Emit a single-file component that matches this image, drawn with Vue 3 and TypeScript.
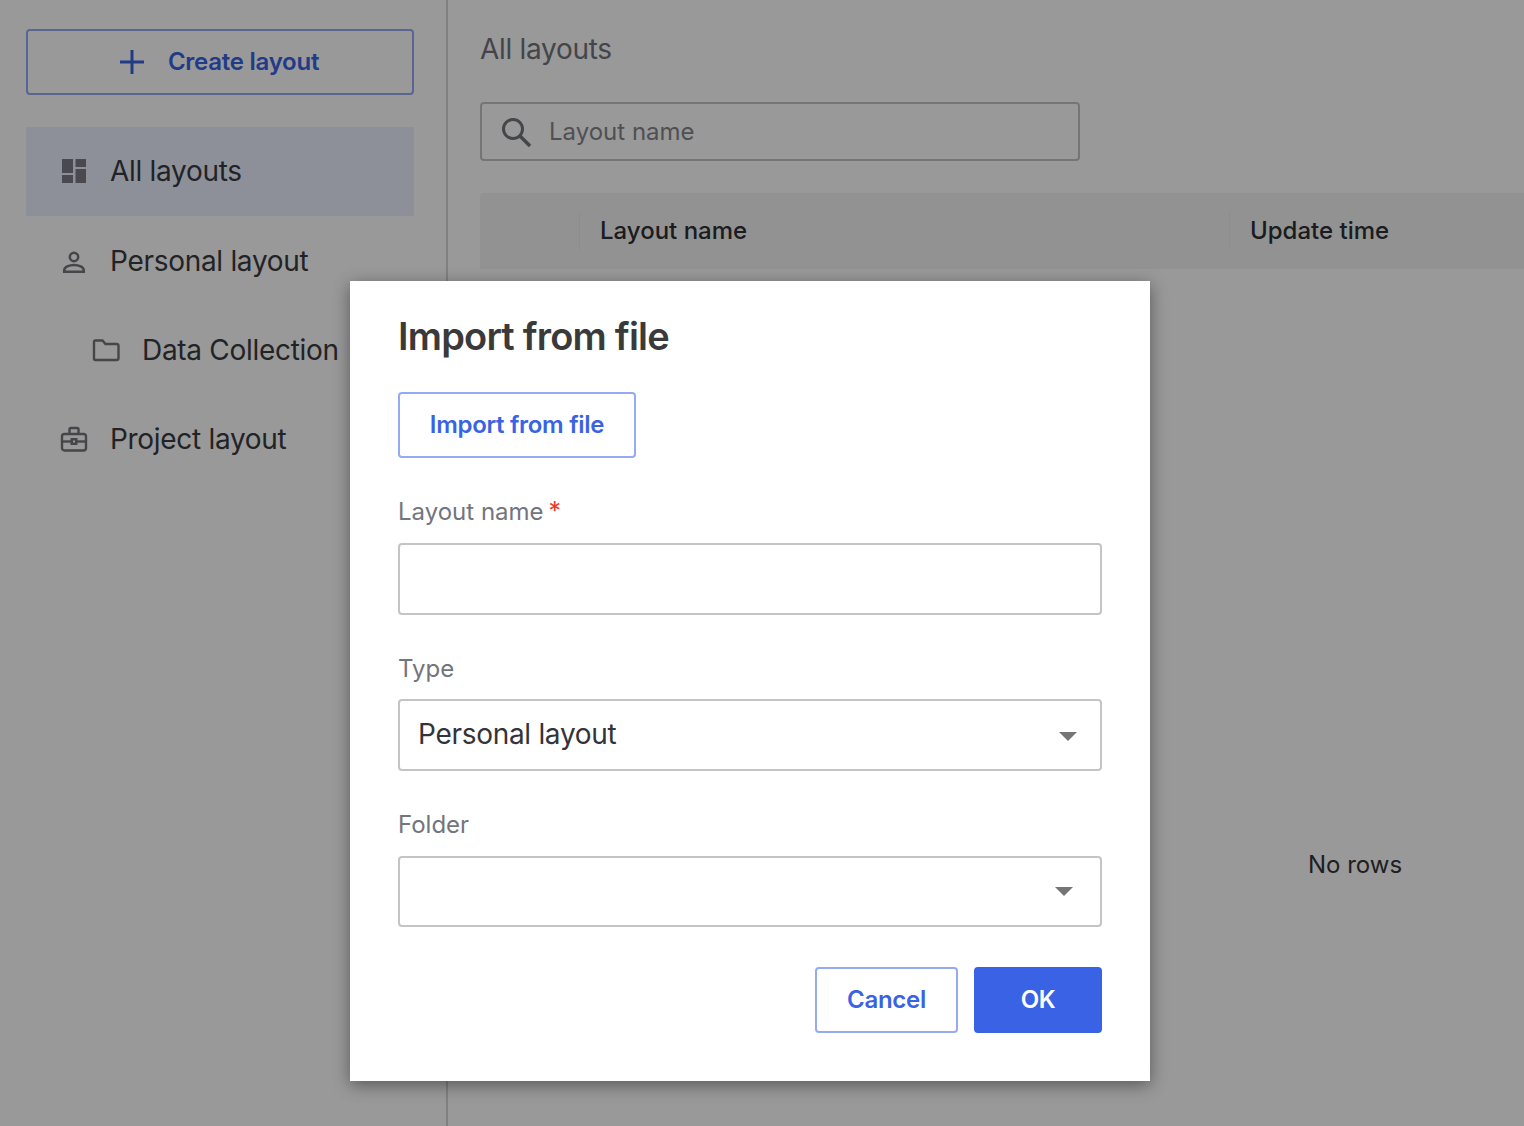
<template>
  <div class="page">
    <aside class="sidebar">
      <button class="create-btn">
        <svg class="plus" width="26" height="26" viewBox="0 0 26 26">
          <path d="M13 1v24M1 13h24" stroke="currentColor" stroke-width="3" fill="none" />
        </svg>
        <span>Create layout</span>
      </button>
      <ul class="menu">
        <li class="menu-item active">
          <svg class="menu-icon" viewBox="0 0 24 24"><path d="M0 0h11v14H0zM13.500 0H24v8H13.500zM13.500 10H24v14H13.500zM0 16h11v8H0z" fill="#7a7b84" /></svg>
          All layouts
        </li>
        <li class="menu-item">
          <svg class="menu-icon" viewBox="0 0 24 24">
            <circle cx="12" cy="8" r="4.200" fill="none" stroke="#74757c" stroke-width="2.500" />
            <path d="M2.200 22.800v-1.300c0-3.500 5-5.500 9.800-5.500s9.800 2 9.800 5.500v1.300z" fill="none" stroke="#74757c" stroke-width="2.500" />
          </svg>
          Personal layout
        </li>
        <li class="menu-item nested">
          <svg class="menu-icon wide" viewBox="0 0 28 24">
            <path d="M2 4a1.500 1.500 0 0 1 1.500-1.500h7l3 3.500h11a2 2 0 0 1 2 2v12a2 2 0 0 1-2 2H3.500a1.500 1.500 0 0 1-1.500-1.500z" fill="none" stroke="#74757c" stroke-width="2.400" />
          </svg>
          Data Collection
        </li>
        <li class="menu-item">
          <svg class="menu-icon wide case" viewBox="0 0 28 26">
            <path d="M9.500 8V3.500A1.500 1.500 0 0 1 11 2h6a1.500 1.500 0 0 1 1.500 1.500V8" fill="none" stroke="#74757c" stroke-width="2.400" />
            <rect x="2" y="8" width="24" height="16.500" rx="2.500" fill="none" stroke="#74757c" stroke-width="2.400" />
            <path d="M2 15.500h24" stroke="#74757c" stroke-width="2.400" />
            <rect x="10.500" y="12" width="7" height="7" fill="#74757c" />
            <rect x="13" y="14.500" width="2" height="2" fill="#fff" />
          </svg>
          Project layout
        </li>
      </ul>
    </aside>

    <main class="content">
      <div class="page-title">All layouts</div>
      <div class="search">
        <svg class="search-icon" width="32" height="32" viewBox="0 0 32 32">
          <circle cx="13" cy="13" r="9.500" fill="none" stroke="#74757c" stroke-width="3" />
          <path d="M20 20l10 10" stroke="#74757c" stroke-width="3.500" fill="none" />
        </svg>
        <span>Layout name</span>
      </div>
      <div class="grid">
        <div class="grid-head">
          <div class="cell cell-check"></div>
          <div class="cell cell-name">Layout name</div>
          <div class="cell cell-time">Update time</div>
        </div>
        <div class="grid-body">No rows</div>
      </div>
    </main>

    <div class="backdrop">
      <div class="dialog">
        <h2 class="dialog-title">Import from file</h2>
        <button class="btn btn-outline btn-file">Import from file</button>

        <label class="field-label field-first">Layout name<span class="req">*</span></label>
        <input class="text-input" v-model="layoutName" type="text" />

        <label class="field-label">Type</label>
        <div class="select">
          <span>{{ layoutType }}</span>
          <span class="caret"></span>
        </div>

        <label class="field-label">Folder</label>
        <div class="select select-folder">
          <span></span>
          <span class="caret"></span>
        </div>

        <div class="dialog-actions">
          <button class="btn btn-outline btn-cancel">Cancel</button>
          <button class="btn btn-primary">OK</button>
        </div>
      </div>
    </div>
  </div>
</template>

<script setup lang="ts">
import { ref } from 'vue'

const layoutName = ref('')
const layoutType = ref('Personal layout')
</script>

<style>
html,
body {
  margin: 0;
  overflow: hidden;
}
</style>

<style scoped>
.page {
  display: flex;
  position: relative;
  width: 1524px;
  height: 1126px;
  overflow: hidden;
  background: #fff;
  color: #33343a;
  font-family: Inter, "Noto Sans", sans-serif;
}

.sidebar {
  box-sizing: border-box;
  flex: 0 0 448px;
  padding: 29px 32px 0 26px;
  border-right: 2px solid #d6d6d6;
}

.create-btn {
  display: flex;
  align-items: center;
  justify-content: center;
  gap: 23px;
  box-sizing: border-box;
  width: 100%;
  height: 66px;
  padding: 0 2px 0 0;
  border: 2px solid #94aaf4;
  border-radius: 4px;
  background: #fff;
  color: #3963e4;
  font: 600 24px Inter, sans-serif;
  letter-spacing: -0.25px;
}

.create-btn span {
  padding-bottom: 2px;
}

.menu {
  margin: 31.500px 0 0;
  padding: 0;
  list-style: none;
}

.menu-item {
  display: flex;
  align-items: center;
  height: 89.400px;
  padding-left: 36px;
  font-size: 28px;
  letter-spacing: -0.3px;
  color: #3a3b40;
}

.menu-item.active {
  background: #ebf0ff;
}

.menu-item.nested {
  padding-left: 66px;
  white-space: nowrap;
}

.menu-icon {
  flex: none;
  width: 24px;
  height: 24px;
  margin-right: 24px;
}

.menu-icon.wide {
  width: 28px;
  margin-right: 22px;
}

.menu-icon.case {
  height: 26px;
  margin-left: -2px;
}

.content {
  flex: 1;
  min-width: 0;
  padding-left: 32px;
}

.page-title {
  height: 102px;
  padding-top: 30px;
  box-sizing: border-box;
  font-size: 28px;
  line-height: 38px;
  letter-spacing: -0.3px;
  color: #72747c;
}

.search {
  display: flex;
  align-items: center;
  box-sizing: border-box;
  width: 600px;
  height: 59px;
  padding: 0 0 0 18px;
  border: 2px solid #c4c4c4;
  border-radius: 4px;
  color: #85868c;
  font-size: 24px;
}

.search-icon {
  margin-right: 17px;
}

.grid {
  width: 1750px;
  margin-top: 32px;
}

.grid-head {
  display: flex;
  align-items: center;
  height: 76px;
  border-radius: 4px 4px 0 0;
  background: #f3f3f3;
  color: #2e2f34;
  font-size: 24px;
  font-weight: 500;
}

.cell {
  box-sizing: border-box;
  display: flex;
  align-items: center;
  height: 38px;
  padding: 0 0 2px 20px;
  border-left: 1px solid #ebebeb;
}

.cell-check {
  width: 99px;
  border-left: none;
}

.cell-name {
  width: 650px;
}

.cell-time {
  flex: 1;
}

.grid-body {
  display: flex;
  align-items: center;
  justify-content: center;
  height: 1190px;
  font-size: 24px;
  color: #33343a;
}

.backdrop {
  position: absolute;
  inset: 0;
  box-sizing: border-box;
  padding: 281px 0 0 350px;
  background: rgba(0, 0, 0, 0.4);
}

.dialog {
  display: flex;
  flex-direction: column;
  box-sizing: border-box;
  width: 800px;
  height: 800px;
  padding: 32px 48px 0;
  background: #fff;
  box-shadow: 0 4px 16px rgba(0, 0, 0, 0.42);
}

.dialog-title {
  margin: 0;
  font-size: 38px;
  line-height: 46px;
  font-weight: 600;
  letter-spacing: -0.8px;
  color: #3a3a3a;
}

.btn {
  box-sizing: border-box;
  height: 66px;
  border-radius: 4px;
  font: 600 24px Inter, sans-serif;
  letter-spacing: -0.3px;
  padding: 0 0 2px;
}

.btn-outline {
  border: 2px solid #94aaf4;
  background: #fff;
  color: #3963e4;
}

.btn-file {
  align-self: flex-start;
  width: 238px;
  margin-top: 33px;
}

.btn-primary {
  width: 128px;
  border: none;
  background: #3963e4;
  color: #fff;
}

.btn-cancel {
  width: 143px;
}

.field-label {
  height: 32px;
  margin: 38px 0 14px;
  font-size: 24px;
  line-height: 32px;
  color: #73747e;
}

.field-first {
  margin: 37px 0 16px;
}

.req {
  margin-left: 5px;
  font-size: 25px;
  color: #ee3a2a;
}

.text-input {
  box-sizing: border-box;
  width: 100%;
  height: 72px;
  border: 2px solid #c4c4c4;
  border-radius: 4px;
  outline: none;
}

.select {
  display: flex;
  align-items: center;
  justify-content: space-between;
  box-sizing: border-box;
  height: 72px;
  padding: 0 23px 2px 18px;
  border: 2px solid #c4c4c4;
  border-radius: 4px;
  font-size: 28px;
  letter-spacing: -0.3px;
  color: #33343a;
}

.select-folder {
  height: 71px;
  margin-top: 1px;
  padding: 0 27px 0 18px;
}

.caret {
  width: 0;
  height: 0;
  margin-top: 4px;
  border-left: 9px solid transparent;
  border-right: 9px solid transparent;
  border-top: 9px solid #757575;
}

.select-folder .caret {
  margin-top: 0;
}

.dialog-actions {
  display: flex;
  justify-content: flex-end;
  gap: 16px;
  margin-top: 40px;
}
</style>
